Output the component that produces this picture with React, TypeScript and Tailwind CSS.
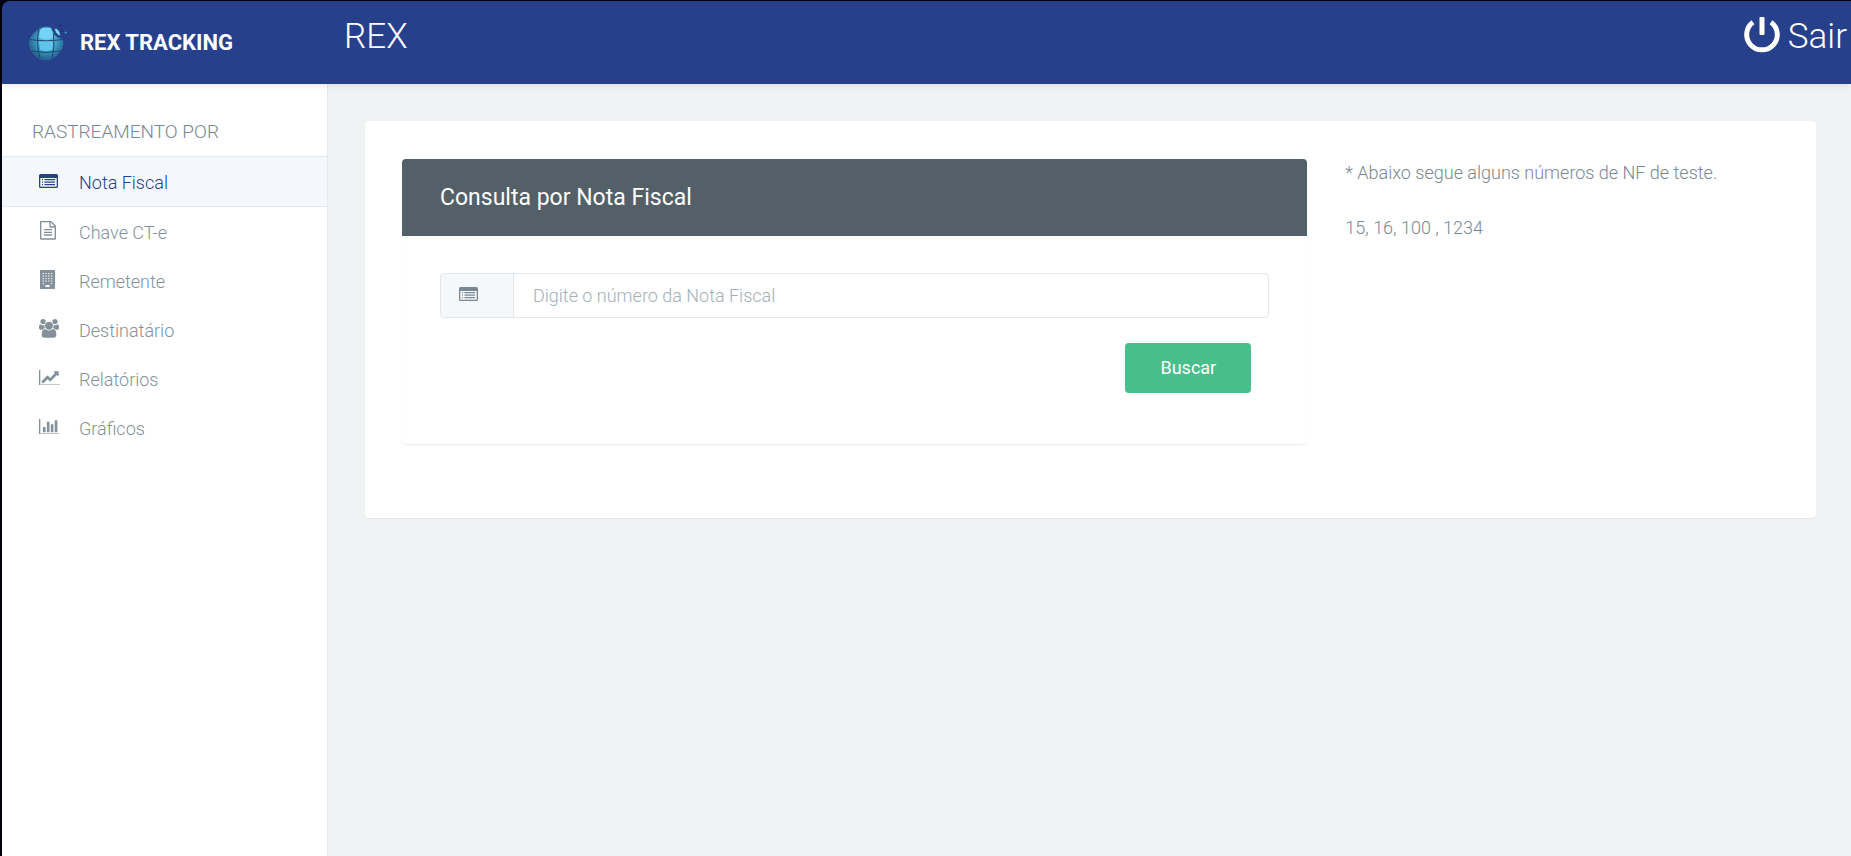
import React, { useState } from "react";

type IconProps = { className?: string };

const ListIcon = ({ className }: IconProps) => (
  <svg viewBox="0 0 19 14" className={className} fill="currentColor" aria-hidden="true">
    <path
      fillRule="evenodd"
      d="M1.5 0h16A1.5 1.5 0 0 1 19 1.500v11a1.500 1.500 0 0 1-1.500 1.500h-16A1.500 1.500 0 0 1 0 12.500v-11A1.500 1.500 0 0 1 1.500 0zM1.300 4v8.200q0 .5.5.5h15.400q.5 0 .5-.5V4z"
    />
    <path d="M3 5h1v1.200H3zM5.500 5H16v1.200H5.500zM3 7.500h1v1.200H3zM5.500 7.500H16v1.200H5.500zM3 10h1v1.200H3zM5.500 10H16v1.200H5.500z" />
  </svg>
);

const FileIcon = ({ className }: IconProps) => (
  <svg viewBox="128 0 1536 1792" className={className} fill="currentColor" aria-hidden="true">
    <path d="M1596 380q28 28 48 76t20 88v1152q0 40-28 68t-68 28h-1344q-40 0-68-28t-28-68v-1600q0-40 28-68t68-28h896q40 0 88 20t76 48zm-444-244v376h376q-10-29-22-41l-313-313q-12-12-41-22zm384 1528v-1024h-416q-40 0-68-28t-28-68v-416h-768v1536h1280zm-1024-864q0-14 9-23t23-9h704q14 0 23 9t9 23v64q0 14-9 23t-23 9h-704q-14 0-23-9t-9-23v-64zm736 224q14 0 23 9t9 23v64q0 14-9 23t-23 9h-704q-14 0-23-9t-9-23v-64q0-14 9-23t23-9h704zm0 256q14 0 23 9t9 23v64q0 14-9 23t-23 9h-704q-14 0-23-9t-9-23v-64q0-14 9-23t23-9h704z" />
  </svg>
);

const BuildingIcon = ({ className }: IconProps) => (
  <svg viewBox="0 0 15 19" className={className} fill="currentColor" aria-hidden="true">
    <path
      fillRule="evenodd"
      d="M.7 0h13.600q.7 0 .7.7v17.600q0 .7-.7.7H.7q-.7 0-.7-.7V.7Q0 0 .7 0zM5.500 15v2h4v-2z"
    />
    <g fill="#fff" fillOpacity="0.85">
      {[3, 5.5, 8, 10.5].map((y) =>
        [2.5, 5.3, 8.1, 10.9].map((x) => <rect key={`${x}-${y}`} x={x} y={y} width="1.4" height="1.2" />)
      )}
      <rect x="2.500" y="13" width="1.400" height="1.200" />
      <rect x="10.900" y="13" width="1.400" height="1.200" />
    </g>
  </svg>
);

const UsersIcon = ({ className }: IconProps) => (
  <svg viewBox="0 0 1920 1792" className={className} fill="currentColor" aria-hidden="true">
    <path d="M593 896q-162 5-265 128h-134q-82 0-138-40.5t-56-118.5q0-353 124-353 6 0 43.5 21t97.5 42.5 119 21.5q67 0 133-23-5 37-5 66 0 139 81 256zm1071 637q0 120-73 189.5t-194 69.5h-874q-121 0-194-69.5t-73-189.5q0-53 3.5-103.5t14-109 26.5-108.5 43-97.5 62-81 85.5-53.5 111.5-20q10 0 43 21.5t73 48 107 48 135 21.5 135-21.5 107-48 73-48 43-21.5q61 0 111.5 20t85.5 53.5 62 81 43 97.5 26.5 108.5 14 109 3.5 103.5zm-1024-1277q0 106-75 181t-181 75-181-75-75-181 75-181 181-75 181 75 75 181zm704 384q0 159-112.5 271.5t-271.5 112.5-271.5-112.5-112.5-271.5 112.5-271.5 271.5-112.5 271.5 112.5 112.5 271.5zm576 225q0 78-56 118.5t-138 40.5h-134q-103-123-265-128 81-117 81-256 0-29-5-66 66 23 133 23 59 0 119-21.5t97.5-42.5 43.5-21q124 0 124 353zm-128-609q0 106-75 181t-181 75-181-75-75-181 75-181 181-75 181 75 75 181z" />
  </svg>
);

const LineChartIcon = ({ className }: IconProps) => (
  <svg viewBox="0 128 2048 1536" className={className} fill="currentColor" aria-hidden="true">
    <path d="M2048 1536v128h-2048v-1536h128v1408h1920zm-128-1248v435q0 21-19.5 29.5t-35.5-7.5l-121-121-633 633q-10 10-23 10t-23-10l-233-233-416 416-192-192 585-585q10-10 23-10t23 10l233 233 464-464-121-121q-16-16-7.5-35.5t29.5-19.500h435q14 0 23 9t9 23z" />
  </svg>
);

const BarChartIcon = ({ className }: IconProps) => (
  <svg viewBox="0 128 2048 1536" className={className} fill="currentColor" aria-hidden="true">
    <path d="M640 896v512h-256v-512h256zm384-512v1024h-256v-1024h256zm1024 1152v128h-2048v-1536h128v1408h1920zm-640-896v768h-256v-768h256zm384-384v1152h-256v-1152h256z" />
  </svg>
);

const PowerIcon = ({ className }: IconProps) => (
  <svg viewBox="0 0 36 36" className={className} fill="none" stroke="currentColor" aria-hidden="true">
    <path d="M9 5.200A15.300 15.300 0 1 0 27 5.200" strokeWidth="5" />
    <rect x="15.500" y="0" width="5" height="18" rx="1" fill="currentColor" stroke="none" />
  </svg>
);

const GlobeLogo = ({ className }: IconProps) => (
  <svg viewBox="0 0 40 38" className={className} aria-hidden="true">
    <defs>
      <radialGradient id="globe" cx="0.52" cy="0.42" r="0.58">
        <stop offset="0" stopColor="#6fcdf0" />
        <stop offset="0.400" stopColor="#48a8cf" />
        <stop offset="0.750" stopColor="#2d7ba4" />
        <stop offset="1" stopColor="#285a8c" />
      </radialGradient>
    </defs>
    <path
      d="M9 6.500L13 3.500Q18 2 23 3L26 10Q29 14 34 14.500L35.500 19Q35 24 32.500 27L28 32.500L23 35.500Q17 37.500 12 35.500L7 32L3 27Q0 21 1.500 15.500Q4 9.500 9 6.500z"
      fill="url(#globe)"
    />
    <path d="M12.500 5Q18 2.500 23 4.500Q25.500 9 25 14Q18 16 11 14Q11 9 12.500 5z" fill="#74d3f6" />
    <path d="M11 17Q18 19 25 17L24.500 26Q18 28 12 26z" fill="#5fc3ea" />
    <path
      d="M10.500 6Q8 19 12 34M25.500 10Q27 22 24 34M2 15.500Q17 18 34.500 15.500M3.500 27Q18 30 32 27"
      fill="none"
      stroke="#1b4b72"
      strokeWidth="1"
    />
    <path d="M26 4Q30 3.500 32 8.500Q33 11 31.500 12Q27 10 26 4z" fill="#7fd6f5" stroke="#1b3768" strokeWidth="0.800" />
    <path d="M29.500 1.500l4-1-.5 2zM33.500 4.500l2 3.500-2.500-1z" fill="#15305f" />
    <path d="M37 7.500l1.500.5v2l-2-1z" fill="#3c9fc8" />
  </svg>
);

const menuItems = [
  { label: "Nota Fiscal", icon: <ListIcon className="w-[19px]" /> },
  { label: "Chave CT-e", icon: <FileIcon className="ml-px w-4" /> },
  { label: "Remetente", icon: <BuildingIcon className="ml-px w-[15px]" /> },
  { label: "Destinatário", icon: <UsersIcon className="w-5" /> },
  { label: "Relatórios", icon: <LineChartIcon className="w-[21px]" /> },
  { label: "Gráficos", icon: <BarChartIcon className="w-[21px]" /> },
];

function Header() {
  return (
    <header className="relative flex h-[83px] items-start rounded-tl-lg bg-[#27408b] text-white shadow-md shadow-black/5">
      <a href="#" className="flex h-full w-[326px] shrink-0 items-center gap-3 pl-[26px]">
        <GlobeLogo className="h-[38px] w-10" />
        <span className="text-[22px] font-bold">REX TRACKING</span>
      </a>
      <h1 className="pt-4 pl-4 text-[35px] leading-10 font-light">REX</h1>
      <a href="#" className="ml-auto flex items-center gap-2 pt-4 pr-1 text-[35px] leading-10 font-light">
        <PowerIcon className="mb-1 w-9" />
        Sair
      </a>
    </header>
  );
}

function Sidebar({ active, onSelect }: { active: string; onSelect: (label: string) => void }) {
  return (
    <nav className="w-[326px] shrink-0 border-r border-[#e4e9ec] bg-white">
      <h2 className="pt-[34px] pb-[10px] pl-[30px] text-[19px] leading-7 font-light text-[#798892]">
        RASTREAMENTO POR
      </h2>
      <ul>
        {menuItems.map((item) => (
          <li key={item.label}>
            <a
              href="#"
              onClick={() => onSelect(item.label)}
              className={
                item.label === active
                  ? "flex h-[51px] items-center border-y border-[#e4e9ec] bg-[#f4f8fc] pt-0.5 pl-[37px] text-lg font-light text-[#27408b]"
                  : "flex h-[49px] items-center pt-0.5 pl-[37px] text-lg font-light text-[#84919b]"
              }
            >
              <span className="w-10 pb-1">{item.icon}</span>
              {item.label}
            </a>
          </li>
        ))}
      </ul>
    </nav>
  );
}

export default function App() {
  const [active, setActive] = useState("Nota Fiscal");
  const [numero, setNumero] = useState("");

  const handleSubmit = (e: React.FormEvent) => {
    e.preventDefault();
  };

  return (
    <div className="flex min-h-screen flex-col bg-[#02020e] pt-px pl-0.5 font-[Roboto,sans-serif]">
      <Header />
      <div className="flex flex-1 bg-[#eff3f4]">
        <Sidebar active={active} onSelect={setActive} />

        <main className="flex-1 py-[37px] pr-[35px] pl-[37px]">
          <div className="grid grid-cols-3 gap-[38px] rounded bg-white px-[37px] pt-[38px] pb-[74px] shadow-[0_1px_1px_rgba(0,0,0,0.05)]">
            <section className="col-span-2 rounded shadow-[0_1px_1px_rgba(0,0,0,0.08)]">
              <h3 className="rounded-t bg-[#536068] px-[38px] py-[22px] text-[23px] leading-[33px] text-white">
                Consulta por Nota Fiscal
              </h3>
              <form onSubmit={handleSubmit} className="px-[38px] pt-[37px] pb-[51px]">
                <div className="flex h-[45px] rounded border border-[#e1e7eb]">
                  <label
                    htmlFor="numero"
                    aria-label="Número da Nota Fiscal"
                    className="flex w-[73px] items-center rounded-l border-r border-[#e1e7eb] bg-[#f4f8fb] pb-1 pl-[18px] text-[#798892]"
                  >
                    <ListIcon className="w-[19px]" />
                  </label>
                  <input
                    id="numero"
                    type="text"
                    value={numero}
                    onChange={(e) => setNumero(e.target.value)}
                    placeholder="Digite o número da Nota Fiscal"
                    className="min-w-0 flex-1 rounded-r px-[19px] text-lg font-light text-[#536068] outline-none placeholder:text-[#a3b0ba]"
                  />
                </div>
                <div className="mt-[25px] flex justify-end pr-[18px]">
                  <button type="submit" className="h-[50px] w-[126px] rounded bg-[#48be8a] text-lg text-white">
                    Buscar
                  </button>
                </div>
              </form>
            </section>

            <div className="text-lg leading-7 font-light text-[#798892]">
              <p className="mb-[27px]">* Abaixo segue alguns números de NF de teste.</p>
              <p>15, 16, 100 , 1234</p>
            </div>
          </div>
        </main>
      </div>
    </div>
  );
}
